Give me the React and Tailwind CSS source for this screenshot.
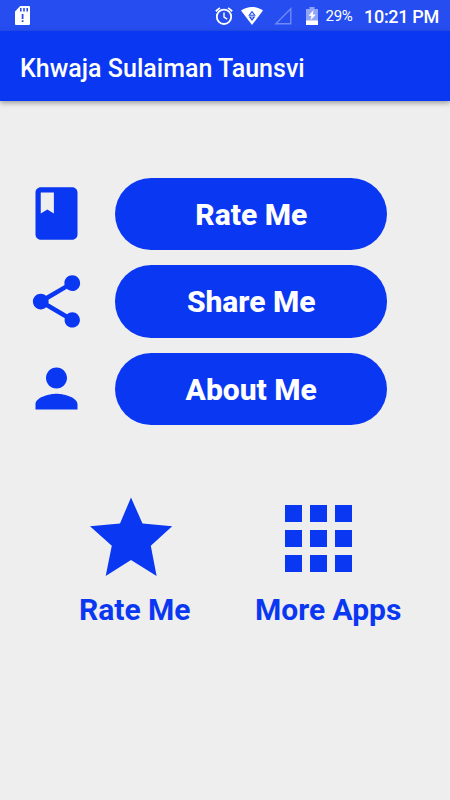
import React from 'react';

const BookIcon = () => (
    <path d="M18 2H6c-1.1 0-2 .9-2 2v16c0 1.1.9 2 2 2h12c1.1 0 2-.9 2-2V4c0-1.1-.9-2-2-2zM6 4h5v8l-2.5-1.5L6 12V4z" />
);

const ShareIcon = () => (
    <path d="M18 16.08c-.76 0-1.44.3-1.96.77L8.91 12.7c.05-.23.09-.46.09-.7s-.04-.47-.09-.7l7.05-4.11c.54.5 1.25.81 2.04.81 1.66 0 3-1.34 3-3s-1.34-3-3-3-3 1.34-3 3c0 .24.04.47.09.7L8.04 9.81C7.5 9.31 6.79 9 6 9c-1.66 0-3 1.34-3 3s1.34 3 3 3c.79 0 1.5-.31 2.04-.81l7.12 4.16c-.05.21-.08.43-.08.65 0 1.61 1.31 2.92 2.92 2.92s2.92-1.31 2.92-2.92-1.31-2.92-2.92-2.92z" />
);

const PersonIcon = () => (
    <path d="M12 12c2.21 0 4-1.79 4-4s-1.79-4-4-4-4 1.79-4 4 1.79 4 4 4zm0 2c-2.67 0-8 1.34-8 4v2h16v-2c0-2.66-5.33-4-8-4z" />
);

const actions = [
    { label: 'Rate Me', Icon: BookIcon },
    { label: 'Share Me', Icon: ShareIcon },
    { label: 'About Me', Icon: PersonIcon },
];

const StatusBar = () => (
    <div className="flex h-[31px] items-center bg-[#264df0] pl-[15px] pr-[11px] text-white">
        <svg width="15" height="19" viewBox="0 0 15 19" className="shrink-0">
            <path fill="#fff" fillRule="evenodd" d="M5.2 0H14a1 1 0 0 1 1 1v17a1 1 0 0 1-1 1H1a1 1 0 0 1-1-1V5.5zM5 2v3.5h1.6V2zm3.2 0v3.5h1.6V2zm3.2 0v3.5H13V2zM6.7 8v5h1.8V8zm0 6.2V16h1.8v-1.8z" />
        </svg>
        <svg width="18" height="18" viewBox="0 0 18 18" fill="none" stroke="#fff" className="ml-[185px] shrink-0">
            <circle cx="9" cy="9.8" r="7.2" strokeWidth="1.8" />
            <path d="M9 5.5v4.7l3.2 2" strokeWidth="1.4" />
            <path d="M.8 4.3 4.9.9M17.2 4.3 13.1.9" strokeWidth="1.8" />
        </svg>
        <svg width="22" height="18" viewBox="0 0 22 18" className="ml-[8px] shrink-0">
            <path fill="#fff" d="M0 3.6C6.5-1.2 15.5-1.2 22 3.6L11 18z" />
            <path fill="none" stroke="#264df0" strokeWidth="1.1" d="m11 4.6 2.7 3.6H8.3z" />
            <path fill="#264df0" d="M7.6 9.4h6.8L11 14z" />
            <path fill="#fff" d="M10.5 9.4h1v2.2h-1z" />
        </svg>
        <svg width="18" height="18" viewBox="0 0 18 18" className="ml-[11px] shrink-0">
            <path d="M16.8 1.8v15H1.8z" fill="none" stroke="#6f89f5" strokeWidth="1.4" />
        </svg>
        <svg width="12" height="18" viewBox="0 0 12 18" className="ml-[14px] shrink-0">
            <path fill="#91a5f7" d="M3.5 0h5v2H12v12H0V2h3.5z" />
            <path fill="#fff" d="M0 13.5h12V18H0zM7.6 3 2.6 8.8h2.8L4.6 13.2l5.2-5.8H6.8z" />
        </svg>
        <span className="ml-[7.5px] mt-[2px] w-[30px] whitespace-nowrap text-[15px] leading-none tracking-[-0.3px]">29%</span>
        <span className="ml-auto mt-[2px] whitespace-nowrap text-[18px] font-medium leading-none tracking-[-0.3px]">10:21 PM</span>
    </div>
);

const ActionRow = ({ label, Icon }) => (
    <div className="flex h-[72.5px] items-center">
        <svg width="63" height="63" viewBox="0 0 24 24" fill="#0a37f2" className="shrink-0">
            <Icon />
        </svg>
        <button className="ml-[26.6px] h-full w-[272.5px] rounded-[36px] bg-[#0a37f2] pt-[1.5px] text-[30px] font-extrabold leading-none text-white">
            {label}
        </button>
    </div>
);

const App = () => {
    return (
        <div className="flex h-[800px] w-[450px] flex-col overflow-hidden bg-[#eeeeee] font-['Roboto',sans-serif]">
            <StatusBar />
            <header className="flex h-[70px] shrink-0 items-center bg-[#0a37f2] pl-5 pt-[4px] shadow-[0_2px_5px_rgba(0,0,0,0.35)]">
                <h1 className="whitespace-nowrap text-[25px] font-medium leading-none tracking-[0.02px] text-white">Khwaja Sulaiman Taunsvi</h1>
            </header>

            <main className="flex flex-col gap-[15px] pl-[25.4px] pt-[76.5px]">
                {actions.map((action) => (
                    <ActionRow key={action.label} {...action} />
                ))}
            </main>

            <section className="flex pl-[79px] pt-[71px] text-[#0a37f2]">
                <button className="flex w-[112px] flex-col items-start">
                    <svg width="84" height="80" viewBox="0 0 84 80" fill="currentColor" className="ml-[10px]">
                        <path d="M42 1.5 53.5 27.6 83.2 30.3 61.8 49.8 67.6 80 42 64 16.7 80 22.8 49.8 1 30.3 31 27.6z" />
                    </svg>
                    <span className="mt-[18px] whitespace-nowrap text-[30px] font-bold leading-[32px]">Rate Me</span>
                </button>
                <button className="ml-[64px] flex w-[148px] flex-col items-start">
                    <div className="ml-[30px] grid h-[80px] grid-cols-[17px_17px_17px] content-start gap-[8px] pt-[9px]">
                        {Array.from({ length: 9 }, (_, i) => (
                            <span key={i} className="h-[17px] w-[17px] bg-[#0a37f2]" />
                        ))}
                    </div>
                    <span className="mt-[18px] whitespace-nowrap text-[30px] font-bold leading-[32px]">More Apps</span>
                </button>
            </section>
        </div>
    );
};

export default App;
